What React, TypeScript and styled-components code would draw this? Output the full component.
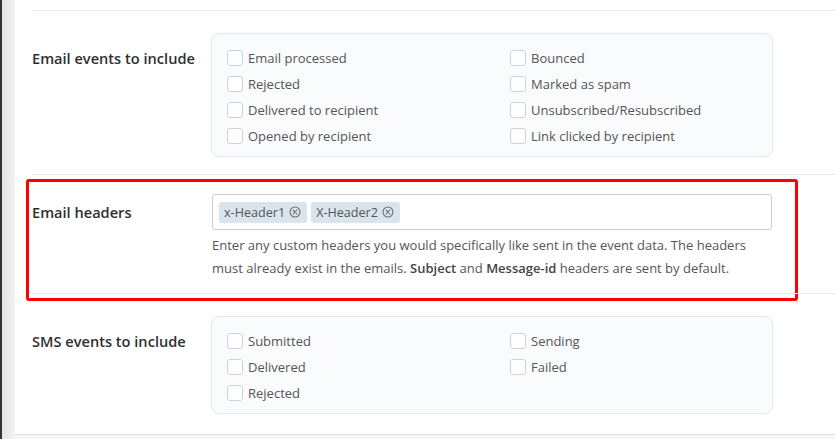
import React from 'react'
import styled, { createGlobalStyle } from 'styled-components'

const GlobalStyle = createGlobalStyle`
  html, body {
    margin: 0;
    padding: 0;
    background: #f6f7f9;
    font-family: "Open Sans", "Liberation Sans", sans-serif;
  }
`

const EMAIL_EVENTS = [
  'Email processed',
  'Bounced',
  'Rejected',
  'Marked as spam',
  'Delivered to recipient',
  'Unsubscribed/Resubscribed',
  'Opened by recipient',
  'Link clicked by recipient',
]

const SMS_EVENTS = ['Submitted', 'Sending', 'Delivered', 'Failed', 'Rejected']

const HEADERS = ['x-Header1', 'X-Header2']

function RemoveIcon() {
  return (
    <svg width="12" height="12" viewBox="0 0 12 12" fill="none">
      <circle cx="6" cy="6" r="5" stroke="#6b6b6b" strokeWidth="1.1" />
      <path d="M4.2 4.2 L7.8 7.8 M7.8 4.2 L4.2 7.8" stroke="#6b6b6b" strokeWidth="1.1" strokeLinecap="round" />
    </svg>
  )
}

function EventGrid({ events }: { events: string[] }) {
  return (
    <CheckPanel>
      {events.map(ev => (
        <CheckRow key={ev}>
          <CheckBox type="checkbox" />
          <span>{ev}</span>
        </CheckRow>
      ))}
    </CheckPanel>
  )
}

export default function App() {
  return (
    <Page>
      <GlobalStyle />
      <Sidebar />
      <MainColumn>
        <Panel>
          <Section pt={22} pb={17}>
            <Label offset={15}>Email events to include</Label>
            <EventGrid events={EMAIL_EVENTS} />
          </Section>

          <Section pt={19} pb={13}>
            <Highlight />
            <Label offset={8}>Email headers</Label>
            <HeaderField>
              <TagInput>
                {HEADERS.map(h => (
                  <Tag key={h}>
                    {h}
                    <RemoveIcon />
                  </Tag>
                ))}
              </TagInput>
              <Help>
                Enter any custom headers you would specifically like sent in the event data. The headers
                must already exist in the emails. <b>Subject</b> and <b>Message-id</b> headers are sent by default.
              </Help>
            </HeaderField>
          </Section>

          <Section pt={22} pb={20}>
            <Label offset={15}>SMS events to include</Label>
            <EventGrid events={SMS_EVENTS} />
          </Section>
        </Panel>
      </MainColumn>
    </Page>
  )
}

const Page = styled.div`
  display: flex;
  min-height: 100vh;
`

const Sidebar = styled.div`
  width: 13px;
  flex-shrink: 0;
  border-left: 2px solid #333;
  background: linear-gradient(to right, #e4e4e4, #f3f3f3);
`

const MainColumn = styled.div`
  flex: 1;
  display: flex;
  flex-direction: column;
`

const Panel = styled.div`
  background: #fff;
  padding: 10px 0 0 17px;
  border-bottom: 1px solid #d9dde1;
`

const Section = styled.div<{ pt: number; pb: number }>`
  position: relative;
  display: grid;
  grid-template-columns: 179px 562px;
  align-items: start;
  padding: ${p => p.pt}px 0 ${p => p.pb}px;
  border-top: 1px solid #e2eaf2;
`

const Highlight = styled.div`
  position: absolute;
  top: 4px;
  left: -6px;
  width: 766px;
  height: 116px;
  border: 3px solid #ff0000;
  border-radius: 3px;
  pointer-events: none;
`

const Label = styled.div<{ offset: number }>`
  padding-top: ${p => p.offset}px;
  font-size: 14.6px;
  line-height: 20px;
  font-weight: 600;
  color: #2f2f2f;
`

const CheckPanel = styled.div`
  display: grid;
  grid-template-columns: 283px 1fr;
  padding: 11px 15px 7px;
  background: #f9fbfd;
  border: 1px solid #dfe7ef;
  border-radius: 8px;
`

const CheckRow = styled.label`
  display: flex;
  align-items: center;
  gap: 5px;
  height: 26px;
  font-size: 13px;
  color: #555;
`

const CheckBox = styled.input`
  appearance: none;
  margin: 0;
  width: 16px;
  height: 16px;
  background: #fff;
  border: 1px solid #c9d4df;
  border-radius: 3px;
`

const HeaderField = styled.div`
  padding: 0 1px;
`

const TagInput = styled.div`
  display: flex;
  align-items: center;
  gap: 4px;
  height: 34px;
  padding: 0 6px;
  border: 1px solid #cccccc;
  border-radius: 3px;
  background: #fff;
`

const Tag = styled.span`
  display: inline-flex;
  align-items: center;
  gap: 4px;
  height: 21px;
  padding: 0 6px 0 5px;
  background: #d9e4ec;
  border-radius: 3px;
  font-size: 12.6px;
  color: #555;
`

const Help = styled.p`
  margin: 4px 0 0;
  font-size: 13px;
  line-height: 23px;
  color: #555;

  b {
    font-weight: 600;
    color: #444;
  }
`
